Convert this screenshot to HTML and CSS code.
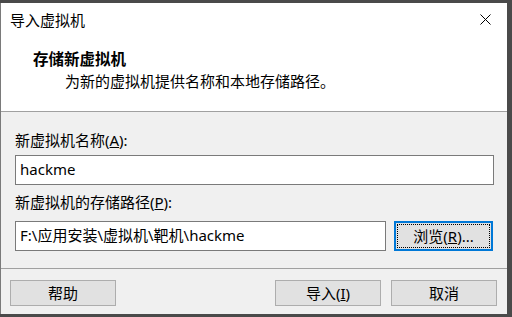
FILE: index.html
```html
<!DOCTYPE html>
<html lang="zh-CN">
<head>
    <meta charset="UTF-8">
    <title>导入虚拟机</title>
    <link rel="stylesheet" href="styles.css">
</head>
<body>
    <div class="window">
        <!-- Title bar -->
        <div class="titlebar">
            <span class="title">导入虚拟机</span>
            <svg class="close" width="11" height="11" viewBox="0 0 11 11">
                <path d="M0.5 0.5 L10.5 10.5 M10.5 0.5 L0.5 10.5" stroke="#000" stroke-width="1" fill="none"/>
            </svg>
        </div>

        <!-- Wizard header -->
        <div class="header">
            <div class="heading">存储新虚拟机</div>
            <div class="subtitle">为新的虚拟机提供名称和本地存储路径。</div>
        </div>

        <!-- Form -->
        <div class="content">
            <label class="label">新虚拟机名称(<u>A</u>):</label>
            <div class="input name-input">hackme</div>

            <label class="label label-path">新虚拟机的存储路径(<u>P</u>):</label>
            <div class="path-row">
                <div class="input path-input">F:\应用安装\虚拟机\靶机\hackme</div>
                <button class="btn browse"><span class="focus">浏览(<u>R</u>)...</span></button>
            </div>
        </div>

        <!-- Footer buttons -->
        <div class="footer">
            <button class="btn">帮助</button>
            <div class="spacer"></div>
            <button class="btn">导入(<u>I</u>)</button>
            <button class="btn">取消</button>
        </div>
    </div>
</body>
</html>
```

FILE: styles.css
```css
/* ======= General ======= */
body {
    margin: 0;
    padding: 0;
    background: #4a4a4a;
    font-family: "Noto Sans", "Noto Sans CJK SC", sans-serif;
    font-size: 15px;
    color: #000;
    overflow: hidden;
}

.window {
    margin-top: 3px;
    width: 506px;
    height: 311px;
    border-left: 1px solid #7a7a7a;
    background: #f0f0f0;
    display: flex;
    flex-direction: column;
}

/* ======= Title bar ======= */
.titlebar {
    height: 36px;
    background: #fff;
    display: flex;
    align-items: center;
    justify-content: space-between;
    padding: 0 16px 0 9px;
}

.title {
    line-height: 20px;
    margin-top: -2px;
}

.close {
    margin-top: -3px;
}

/* ======= Header ======= */
.header {
    height: 73px;
    background: #fff;
    border-bottom: 1px solid #a0a0a0;
    padding-left: 32px;
    box-sizing: border-box;
    padding-top: 9px;
}

.heading {
    font-weight: bold;
    font-size: 15.5px;
    line-height: 22px;
}

.subtitle {
    line-height: 22px;
    padding-left: 32px;
}

/* ======= Form ======= */
.content {
    flex: 1;
    padding: 18px 0 0 14px;
    border-bottom: 1px solid #a0a0a0;
}

.label {
    display: block;
    line-height: 20px;
}

.label-path {
    margin-top: 7px;
}

.input {
    height: 30px;
    box-sizing: border-box;
    border: 1px solid #7a7a7a;
    background: #fff;
    padding-left: 4px;
    line-height: 27px;
}

.name-input {
    width: 479px;
    margin-top: 5px;
}

.path-row {
    display: flex;
    gap: 8px;
    margin-top: 9px;
}

.path-input {
    width: 371px;
}

/* ======= Buttons ======= */
.btn {
    width: 106px;
    height: 26px;
    background: #e1e1e1;
    border: 1px solid #adadad;
    font-family: inherit;
    font-size: 15px;
    color: #000;
    padding: 0;
    line-height: 22px;
}

.browse {
    width: 99px;
    height: 30px;
    border: 2px solid #0078d7;
    padding: 1px;
}

.browse .focus {
    display: block;
    height: 100%;
    box-sizing: border-box;
    border: 1px dotted #000;
    line-height: 22px;
}

.footer {
    height: 45px;
    display: flex;
    align-items: flex-start;
    gap: 10px;
    padding: 11px 10px 0 9px;
    box-sizing: border-box;
}

.spacer {
    flex: 1;
}
```
